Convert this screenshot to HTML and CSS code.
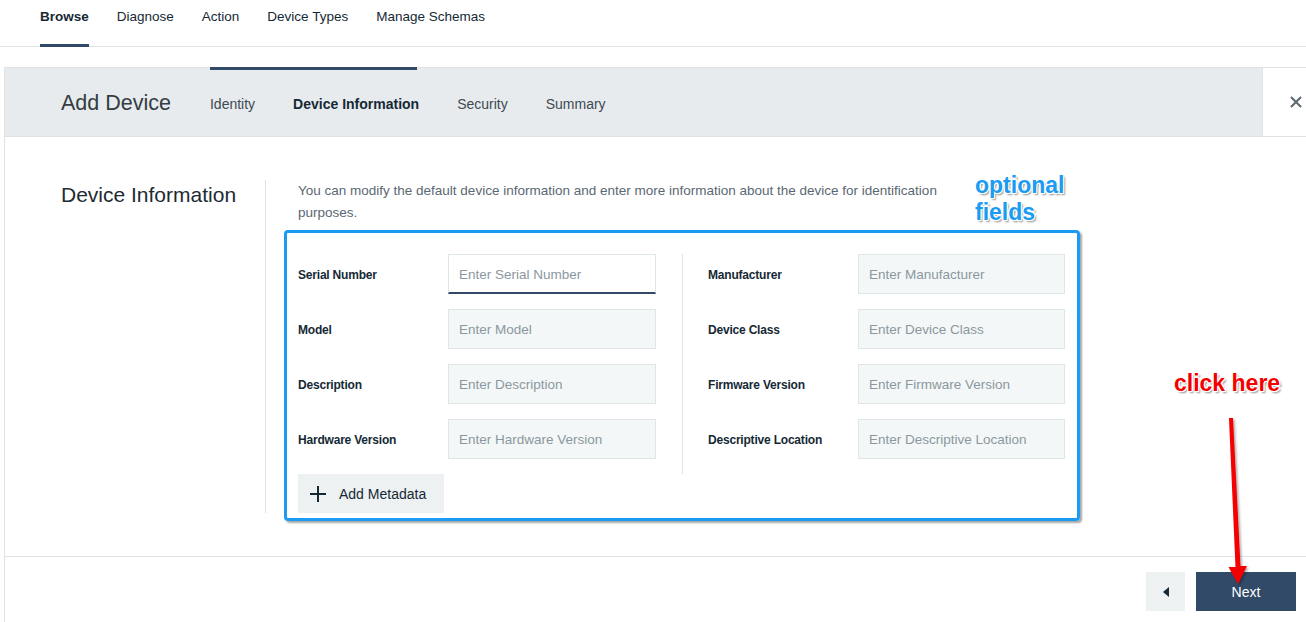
FILE: index.html
```html
<!DOCTYPE html>
<html>
<head>
<meta charset="utf-8">
<link rel="stylesheet" href="styles.css">
</head>
<body>
<nav class="topnav">
  <a class="nav-item active">Browse</a>
  <a class="nav-item">Diagnose</a>
  <a class="nav-item">Action</a>
  <a class="nav-item">Device Types</a>
  <a class="nav-item">Manage Schemas</a>
</nav>

<section class="panel">
  <header class="panel-head">
    <div class="progress"></div>
    <h1 class="panel-title">Add Device</h1>
    <div class="steps">
      <span class="step">Identity</span>
      <span class="step current">Device Information</span>
      <span class="step">Security</span>
      <span class="step">Summary</span>
    </div>
    <div class="close">
      <svg width="12" height="12" viewBox="0 0 12 12"><path d="M1 1L11 11M11 1L1 11" stroke="#5a6872" stroke-width="2" fill="none"/></svg>
    </div>
  </header>

  <div class="panel-body">
    <div class="side">
      <h2 class="side-title">Device Information</h2>
    </div>
    <div class="content">
      <p class="desc">You can modify the default device information and enter more information about the device for identification purposes.</p>
      <div class="form">
        <div class="annot-box"></div>
        <div class="cols">
          <div class="col">
            <div class="row"><label>Serial Number</label><div class="input focus">Enter Serial Number</div></div>
            <div class="row"><label>Model</label><div class="input">Enter Model</div></div>
            <div class="row"><label>Description</label><div class="input">Enter Description</div></div>
            <div class="row"><label>Hardware Version</label><div class="input">Enter Hardware Version</div></div>
          </div>
          <div class="col right">
            <div class="row"><label>Manufacturer</label><div class="input">Enter Manufacturer</div></div>
            <div class="row"><label>Device Class</label><div class="input">Enter Device Class</div></div>
            <div class="row"><label>Firmware Version</label><div class="input">Enter Firmware Version</div></div>
            <div class="row"><label>Descriptive Location</label><div class="input">Enter Descriptive Location</div></div>
          </div>
        </div>
        <button class="add-btn">
          <svg width="16" height="16" viewBox="0 0 16 16"><path d="M8 0V16M0 8H16" stroke="#152935" stroke-width="2" fill="none"/></svg>
          <span>Add Metadata</span>
        </button>
      </div>
    </div>
  </div>

  <footer class="panel-foot">
    <button class="back-btn">
      <svg width="6" height="10" viewBox="0 0 6 10"><path d="M6 0V10L0 5Z" fill="#152935"/></svg>
    </button>
    <button class="next-btn">Next</button>
  </footer>
</section>

<div class="note note-blue">optional<br>fields</div>
<div class="note note-red">click here</div>
<svg class="arrow" width="1306" height="622" viewBox="0 0 1306 622">
  <defs>
    <filter id="sh" x="-50%" y="-10%" width="200%" height="120%">
      <feDropShadow dx="1.5" dy="1.5" stdDeviation="1" flood-color="#000" flood-opacity="0.35"/>
    </filter>
  </defs>
  <g filter="url(#sh)">
    <polygon points="1229,418 1233,418 1240.5,566 1247,566 1238,584 1228.5,567 1235.5,567" fill="#f40000"/>
  </g>
</svg>
</body>
</html>
```
FILE: styles.css
```css
* { box-sizing: border-box; }
html, body { margin: 0; padding: 0; }
body {
  font-family: "Liberation Sans", Arial, sans-serif;
  color: #152935;
  background: #fff;
  width: 1306px;
  height: 622px;
  overflow: hidden;
  position: relative;
}

/* top nav */
.topnav {
  display: flex;
  align-items: flex-start;
  gap: 28px;
  height: 47px;
  padding-left: 40px;
  border-bottom: 1px solid #dfe3e6;
}
.nav-item {
  font-size: 13.5px;
  line-height: 20px;
  padding-top: 7px;
  height: 47px;
  color: #152935;
  border-bottom: 3px solid transparent;
}
.nav-item.active {
  font-weight: bold;
  border-bottom-color: #304a68;
}

/* panel */
.panel {
  margin-top: 20px;
  margin-left: 4px;
  border-left: 1px solid #dfe3e6;
}
.panel-head {
  position: relative;
  display: flex;
  align-items: center;
  height: 70px;
  padding-top: 3px;
  background: #e8ebee;
  border-top: 1px solid #dfe3e6;
  border-bottom: 1px solid #dfe3e6;
}
.progress {
  position: absolute;
  left: 205px;
  top: -1px;
  width: 207px;
  height: 3px;
  background: #304a68;
}
.panel-title {
  margin: 0;
  padding-left: 56px;
  font-size: 21.5px;
  font-weight: normal;
  color: #333d42;
}
.steps {
  display: flex;
  gap: 38px;
  margin-left: 39px;
  font-size: 14px;
  color: #3d4a52;
}
.step.current {
  font-weight: bold;
  color: #152935;
}
.close {
  margin-left: auto;
  align-self: stretch;
  margin-top: -3px;
  width: 44px;
  background: #fff;
  border-left: 1px solid #dfe3e6;
  display: flex;
  align-items: center;
  padding-left: 27px;
}
.close svg { display: block; }

/* body */
.panel-body {
  display: flex;
  padding: 43px 0;
}
.side {
  width: 260px;
  padding-left: 56px;
}
.side-title {
  margin: 0;
  font-size: 21px;
  line-height: 30px;
  font-weight: normal;
  color: #1d2b33;
}
.content {
  border-left: 1px solid #dfe3e6;
  padding-left: 32px;
}
.desc {
  margin: 0 0 30px;
  max-width: 660px;
  font-size: 13.5px;
  line-height: 22px;
  color: #5a6872;
}
.form {
  position: relative;
  width: 767px;
}
.annot-box {
  position: absolute;
  left: -14px;
  top: -24px;
  right: -15px;
  bottom: -8px;
  border: 3px solid #1b9bf2;
  border-radius: 4px;
  box-shadow: 2px 2px 2px rgba(0,0,0,0.35);
  pointer-events: none;
}
.cols {
  display: flex;
}
.col {
  width: 384px;
}
.col.right {
  width: 383px;
  border-left: 1px solid #dfe3e6;
  padding-left: 25px;
}
.row {
  display: flex;
  align-items: center;
  height: 40px;
  margin-bottom: 15px;
}
.row label {
  width: 150px;
  padding-top: 1px;
  font-size: 12px;
  font-weight: bold;
  letter-spacing: -0.2px;
  color: #152935;
}
.input {
  width: 208px;
  height: 40px;
  line-height: 40px;
  padding-left: 10px;
  background: #f4f7f7;
  border: 1px solid #dfe6e6;
  font-size: 13.5px;
  color: #8b979f;
}
.col.right .input { width: 207px; }
.input.focus {
  background: #fff;
  border-bottom: 2px solid #304a68;
}
.add-btn {
  display: flex;
  align-items: center;
  gap: 13px;
  width: 146px;
  height: 39px;
  padding: 0 0 0 12px;
  border: none;
  background: #eef1f2;
  font-family: inherit;
  font-size: 14px;
  color: #152935;
}
.add-btn svg { display: block; }

/* footer */
.panel-foot {
  display: flex;
  justify-content: flex-end;
  gap: 11px;
  padding: 15px 10px 15px;
  border-top: 1px solid #dfe3e6;
}
.back-btn {
  width: 39px;
  height: 39px;
  border: none;
  background: #eef1f2;
  display: flex;
  align-items: center;
  justify-content: center;
  padding: 0;
}
.next-btn {
  width: 100px;
  height: 39px;
  border: none;
  background: #304a68;
  color: #fff;
  font-family: inherit;
  font-size: 14px;
}

/* annotations */
.note {
  position: absolute;
  font-weight: bold;
  font-family: "Liberation Sans", Arial, sans-serif;
  text-shadow:
    -1px -1px 0 #fff, 1px -1px 0 #fff, -1px 1px 0 #fff, 1px 1px 0 #fff,
    0 -1px 0 #fff, 0 1px 0 #fff, -1px 0 0 #fff, 1px 0 0 #fff,
    2px 2px 2px rgba(0,0,0,0.45);
}
.note-blue {
  left: 975px;
  top: 172px;
  font-size: 23px;
  line-height: 27px;
  color: #1b9bf2;
}
.note-red {
  left: 1174px;
  top: 369px;
  font-size: 23px;
  line-height: 28px;
  color: #f40000;
}
.arrow {
  position: absolute;
  left: 0;
  top: 0;
  pointer-events: none;
}
```
